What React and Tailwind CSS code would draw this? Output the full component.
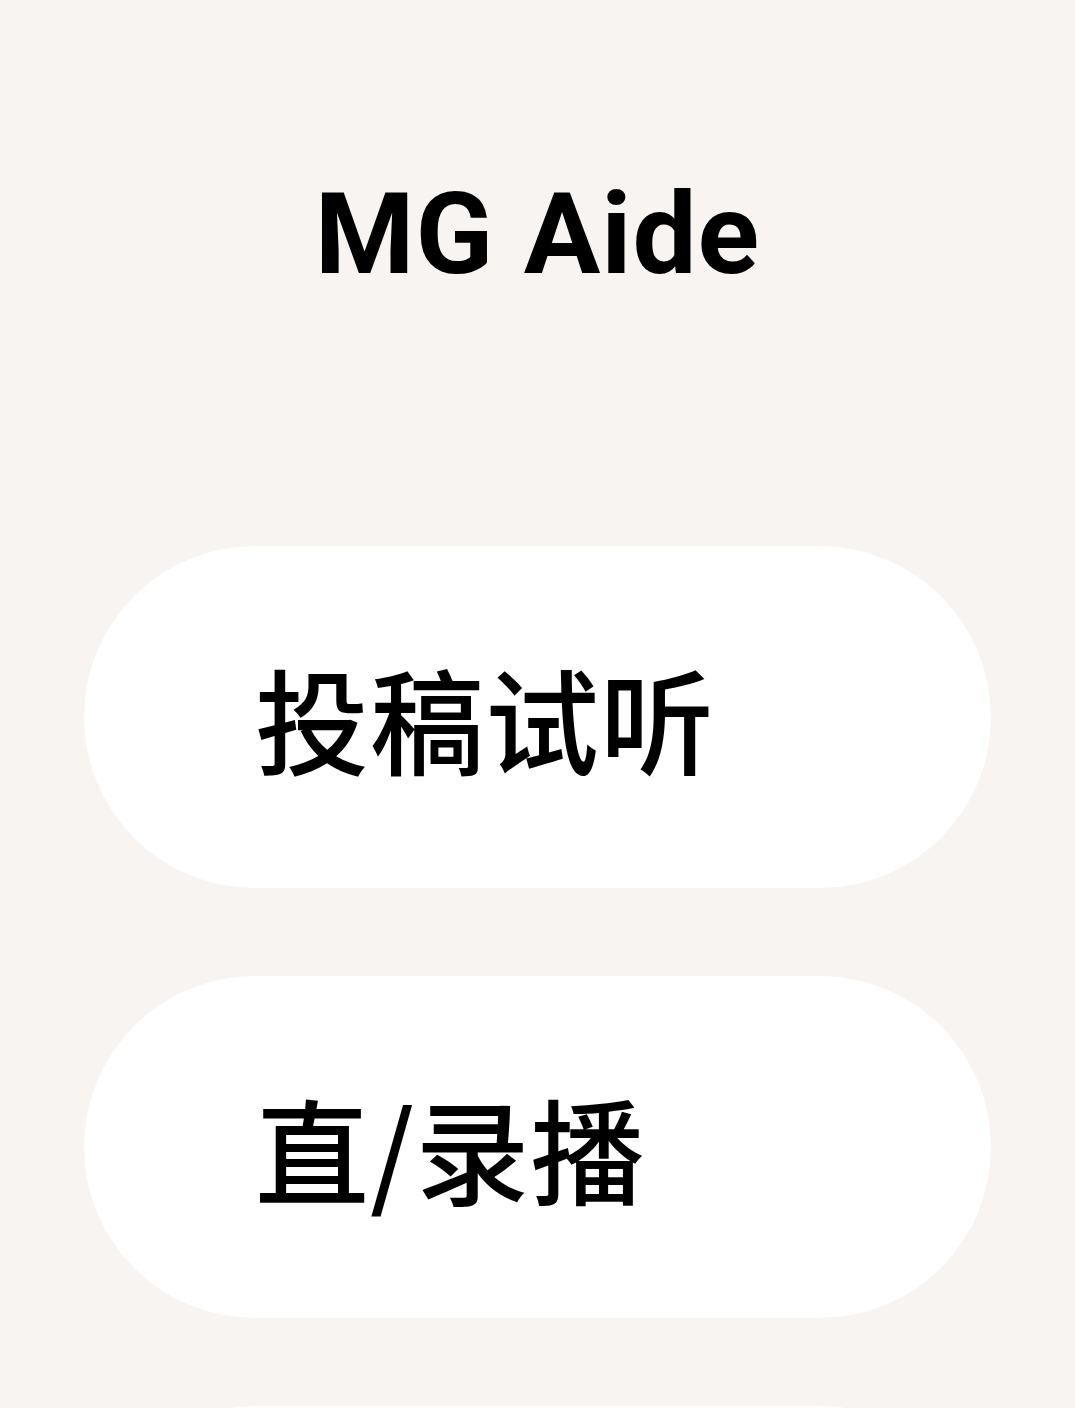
const items = ["投稿试听", "直/录播", ""];

export default function App() {
    return (
        <div className="min-h-screen w-full bg-[#f7f4f1] overflow-hidden">
            {/* Title */}
            <div className="pt-[177px] flex justify-center">
                <h1 className="text-[114px] leading-none font-bold text-black font-['Roboto','Liberation_Sans',sans-serif] tracking-[1px]">
                    MG Aide
                </h1>
            </div>

            {/* Menu pills */}
            <div className="mt-[255px] px-[84px] flex flex-col gap-[88px]">
                {items.map((label, index) => (
                    <div
                        key={index}
                        className="h-[342px] w-full shrink-0 rounded-full bg-white flex items-center pl-[171px]"
                    >
                        <span className="text-[114px] leading-none text-black font-medium tracking-[1px] font-['Noto_Sans_CJK_SC','Noto_Sans',sans-serif]">
                            {label}
                        </span>
                    </div>
                ))}
            </div>
        </div>
    );
}
